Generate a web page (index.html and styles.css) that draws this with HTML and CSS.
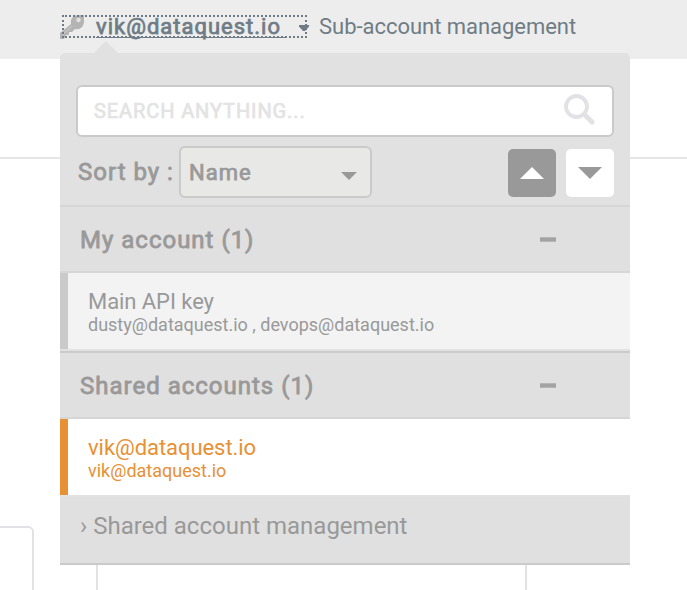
FILE: index.html
```html
<!DOCTYPE html>
<html lang="en">
<head>
<meta charset="utf-8">
<title>Sub-account management</title>
<link rel="stylesheet" href="styles.css">
</head>
<body>
<div class="page">
  <header class="topbar">
    <a class="account-link">
      <svg class="key" width="25" height="25" viewBox="0 0 25 25"><path d="M0 24V18L11 9C10 3 14 0 19 0H24V6C24 12 20 15 15 14L12 17H9V20H6L4 24Z" fill="#b4b4b4"/><circle cx="18.5" cy="5" r="2.2" fill="#e2e2e2"/><path d="M2 20L12 11" stroke="#c4c4c4" stroke-width="1.5"/></svg>
      <span class="account-name">vik@dataquest.io</span>
      <svg class="caret" width="10" height="6" viewBox="0 0 10 6"><path d="M0 0H10V1.5L6 6H4L0 1.5Z" fill="#6f7c85"/></svg>
    </a>
    <span class="page-name">Sub-account management</span>
  </header>
  <div class="content">
    <div class="divider"></div>
    <div class="cards"><div class="card card-first"></div><div class="card card-second"></div></div>
  </div>
  <div class="menu">
    <svg class="tip" width="24" height="12" viewBox="0 0 24 12"><path d="M0 12L12 0L24 12Z" fill="#e1e1e1"/></svg>
    <div class="search">
      <span class="placeholder">SEARCH ANYTHING...</span>
      <svg width="32" height="32" viewBox="0 0 32 32" fill="none" stroke="#e1e1e6"><circle cx="12.5" cy="12.5" r="10.5" stroke-width="3.8"/><path d="M19.5 19.5L22 22" stroke-width="4"/><path d="M22 22L28 28" stroke-width="5" stroke-linecap="round"/></svg>
    </div>
    <div class="sort">
      <span class="sort-label">Sort by :</span>
      <div class="select"><span>Name</span><svg width="16" height="8" viewBox="0 0 16 8"><path d="M0 0H16L8 8Z" fill="#999"/></svg></div>
      <div class="order order-up"><svg width="24" height="12" viewBox="0 0 24 12"><path d="M0 12L12 0L24 12Z" fill="#fff"/></svg></div>
      <div class="order order-down"><svg width="24" height="12" viewBox="0 0 24 12"><path d="M0 0H24L12 12Z" fill="#999"/></svg></div>
    </div>
    <div class="group"><span>My account (1)</span><i class="minus"></i></div>
    <div class="entry">
      <div class="entry-name">Main API key</div>
      <div class="entry-mail">dusty@dataquest.io , devops@dataquest.io</div>
    </div>
    <div class="group group-shared"><span>Shared accounts (1)</span><i class="minus"></i></div>
    <div class="entry entry-active">
      <div class="entry-name">vik@dataquest.io</div>
      <div class="entry-mail">vik@dataquest.io</div>
    </div>
    <div class="manage">› Shared account management</div>
  </div>
</div>
</body>
</html>
```
FILE: styles.css
```css
* { box-sizing: border-box; }
body { margin: 0; background: #fff; font-family: Roboto, "Liberation Sans", sans-serif; color: #999; }
svg { display: block; flex: none; }
.page { position: relative; width: 687px; height: 590px; overflow: hidden; display: flex; flex-direction: column; }
.topbar { height: 59px; flex: none; background: #ededed; display: flex; align-items: flex-start; padding: 15px 0 0 62px; color: #6f7c85; font-size: 22px; line-height: 24px; white-space: nowrap; }
.account-link { width: 245px; height: 23px; display: flex; outline: 2px dotted #6f7c85; outline-offset: -2px; }
.key { margin-left: -2px; }
.account-name { margin-left: 11px; width: 190px; flex: none; height: 23px; line-height: 23px; border-bottom: 1px solid #6f7c85; letter-spacing: 1px; -webkit-text-stroke: .75px; }
.caret { margin: 10px 0 0 13px; }
.page-name { margin-left: 12px; line-height: 23px; letter-spacing: -.03px; }
.content { flex: 1; display: flex; flex-direction: column; }
.divider { height: 2px; margin-top: 98px; background: #e6e6e6; flex: none; }
.cards { flex: 1; display: flex; padding-top: 367px; }
.card { border: 2px solid #e1e1e6; height: 100px; flex: none; border-radius: 6px; }
.card-first { width: 40px; margin-left: -6px; }
.card-second { width: 431px; margin-left: 62px; }
.menu { position: absolute; left: 60px; top: 53px; width: 570px; height: 512px; background: #e1e1e1; border-radius: 5px 5px 0 0; padding-top: 32px; }
.tip { position: absolute; left: 34px; top: -12px; }
.search { margin: 0 16px; height: 52px; border: 2px solid #cacaca; border-radius: 6px; background: #fff; display: flex; align-items: center; justify-content: space-between; padding: 0 16px; }
.search svg { margin-bottom: 2px; }
.placeholder { font-size: 20px; color: #e3e3e3; letter-spacing: .9px; -webkit-text-stroke: .65px; }
.sort { height: 68px; display: flex; align-items: flex-start; padding: 9px 16px 0 18px; }
.sort-label { width: 101px; font-size: 24px; line-height: 52px; letter-spacing: 1px; -webkit-text-stroke: .8px; white-space: nowrap; }
.select { width: 193px; height: 52px; border: 2px solid #cacaca; border-radius: 6px; background: #e8e8e6; display: flex; align-items: center; justify-content: space-between; padding: 0 13px 0 8px; font-size: 22px; letter-spacing: 1px; -webkit-text-stroke: .75px; }
.select svg { margin-top: 7px; }
.order { width: 48px; height: 48px; border-radius: 5px; margin-top: 3px; display: flex; align-items: center; justify-content: center; }
.order-up { margin-left: auto; background: #999; }
.order-down { margin-left: 10px; background: #fff; }
.group { height: 68px; border-top: 2px solid #d6d6d6; border-bottom: 2px solid #d6d6d6; background: #e0e0e0; display: flex; align-items: center; justify-content: space-between; padding: 0 74px 0 20px; font-size: 24px; letter-spacing: 1px; -webkit-text-stroke: .8px; }
.group span { padding-top: 1px; }
.group-shared { border-top-color: #cacaca; }
.minus { width: 16px; height: 5px; background: #a3a3a3; border-top: 1px solid #b5b5b5; border-bottom: 1px solid #b5b5b5; }
.entry { height: 78px; border-bottom: 2px solid #e2e2e2; background: linear-gradient(90deg, #cacaca 8px, #f3f3f3 8px); padding: 17px 0 0 28px; white-space: nowrap; }
.entry-active { background: linear-gradient(90deg, #e89034 8px, #fff 8px); color: #e89034; }
.entry-name { font-size: 22px; line-height: 24px; letter-spacing: -.06px; }
.entry-mail { font-size: 18px; line-height: 21px; }
.manage { height: 68px; border-bottom: 2px solid #cacaca; background: #e0e0e0; padding: 0 20px; font-size: 24px; line-height: 59px; }
```
